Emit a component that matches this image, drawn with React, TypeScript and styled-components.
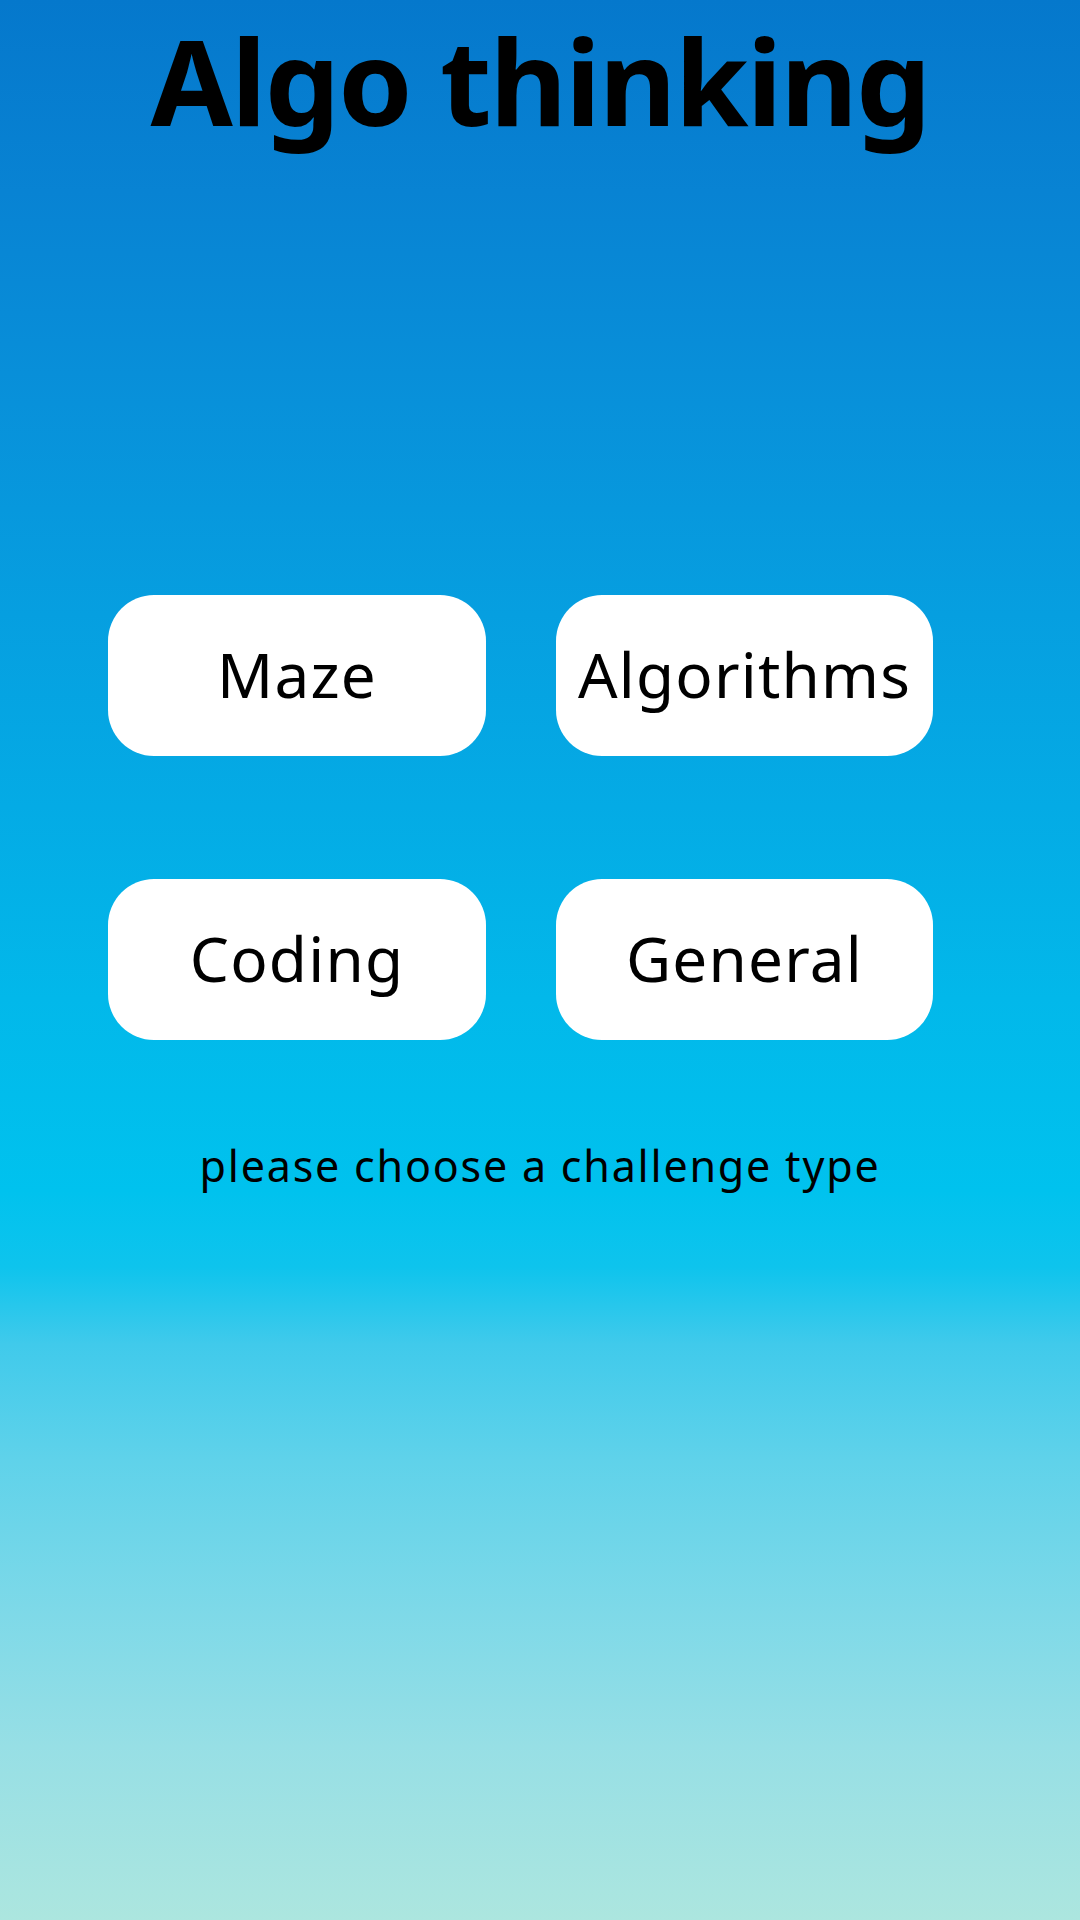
import React from "react";
import styled, { createGlobalStyle } from "styled-components";

const GlobalStyle = createGlobalStyle`
  html, body {
    margin: 0;
    padding: 0;
  }
  body {
    font-family: "Noto Sans", "Open Sans", sans-serif;
  }
`;

const Page = styled.main`
  width: 1080px;
  min-height: 1920px;
  box-sizing: border-box;
  display: flex;
  flex-direction: column;
  background: linear-gradient(
    180deg,
    #0578cc 0%,
    #0883d3 10%,
    #0891da 21%,
    #069fe0 32%,
    #04abe5 42%,
    #02b8ea 52%,
    #00c2ee 62%,
    #0ec4ed 66%,
    #40caeb 70%,
    #5fd2ea 76%,
    #7ed9e8 84%,
    #97dfe5 91%,
    #ace6df 100%
  );
`;

const Title = styled.h1`
  margin: 0;
  height: 160px;
  font-family: "Noto Sans", "Open Sans", sans-serif;
  font-weight: 700;
  font-size: 119px;
  line-height: 160px;
  color: #000;
  text-align: center;
  letter-spacing: -1.8px;
`;

const ChoiceGrid = styled.div`
  display: grid;
  grid-template-columns: 378px 377px;
  grid-auto-rows: 161px;
  column-gap: 70px;
  row-gap: 123px;
  margin-top: 435px;
  padding-left: 108px;
`;

const ChoiceButton = styled.button`
  display: flex;
  align-items: center;
  justify-content: center;
  border: none;
  border-radius: 46px;
  background: #ffffff;
  color: #000;
  font-family: "Noto Sans", "Open Sans", sans-serif;
  font-weight: 400;
  font-size: 62px;
  letter-spacing: 1.2px;
  padding: 0 0 4px;
  cursor: pointer;
  white-space: nowrap;
`;

const Prompt = styled.p`
  margin: 100px 0 0;
  font-family: "Noto Sans", "Open Sans", sans-serif;
  font-size: 43px;
  line-height: 52px;
  letter-spacing: 1.8px;
  color: #000;
  text-align: center;
`;

const choices = ["Maze", "Algorithms", "Coding", "General"];

export default function App() {
  return (
    <>
      <GlobalStyle />
      <Page>
        <Title>Algo thinking</Title>
        <ChoiceGrid>
          {choices.map((c) => (
            <ChoiceButton key={c}>{c}</ChoiceButton>
          ))}
        </ChoiceGrid>
        <Prompt>please choose a challenge type</Prompt>
      </Page>
    </>
  );
}
